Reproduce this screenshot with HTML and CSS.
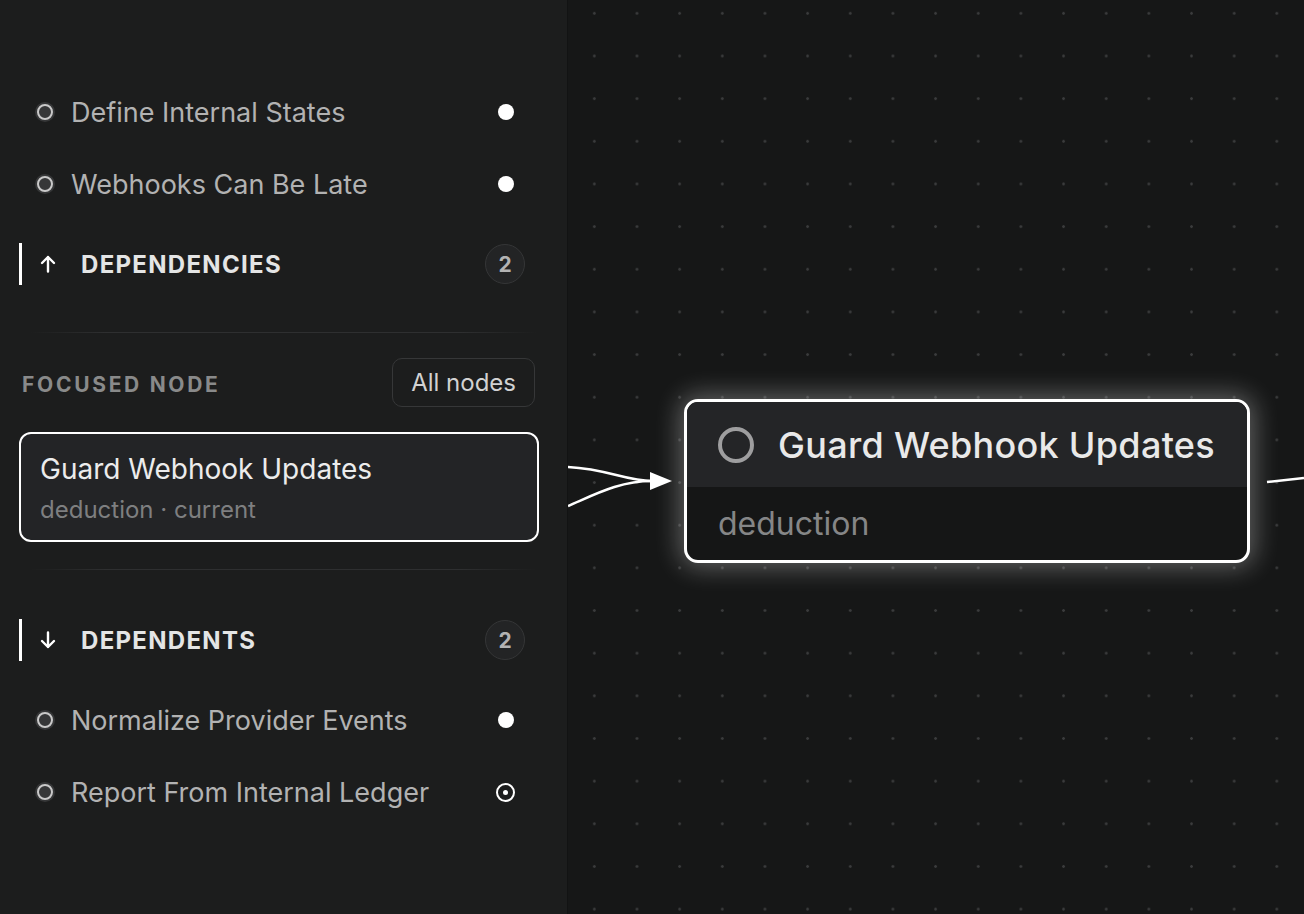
FILE: index.html
```html
<!DOCTYPE html>
<html lang="en">
<head>
  <meta charset="UTF-8" />
  <title>Graph focus</title>
  <link rel="stylesheet" href="styles.css">
</head>
<body>
  <!-- Sidebar with focused node and its neighbours -->
  <aside class="sidebar">
    <ul class="dep-list">
      <li class="dep-item">
        <span class="kind-icon"></span>
        <span class="dep-name">Define Internal States</span>
        <span class="status status-done"></span>
      </li>
      <li class="dep-item">
        <span class="kind-icon"></span>
        <span class="dep-name">Webhooks Can Be Late</span>
        <span class="status status-done"></span>
      </li>
    </ul>

    <div class="section-head">
      <svg class="dir-icon" viewBox="0 0 16 18" width="16" height="18">
        <path d="M8 16.5V2M2 8l6-6 6 6" fill="none" stroke="#fff" stroke-width="2.4" stroke-linecap="round" stroke-linejoin="round"/>
      </svg>
      <span class="section-title">DEPENDENCIES</span>
      <span class="count">2</span>
    </div>

    <div class="divider"></div>

    <div class="focus-row">
      <span class="focus-label">FOCUSED NODE</span>
      <button class="ghost-btn">All nodes</button>
    </div>

    <div class="focus-card">
      <div class="focus-title">Guard Webhook Updates</div>
      <div class="focus-meta">deduction · current</div>
    </div>

    <div class="divider"></div>

    <div class="section-head">
      <svg class="dir-icon" viewBox="0 0 16 18" width="16" height="18">
        <path d="M8 1.5V16M2 10l6 6 6-6" fill="none" stroke="#fff" stroke-width="2.4" stroke-linecap="round" stroke-linejoin="round"/>
      </svg>
      <span class="section-title">DEPENDENTS</span>
      <span class="count">2</span>
    </div>

    <ul class="dep-list">
      <li class="dep-item">
        <span class="kind-icon"></span>
        <span class="dep-name">Normalize Provider Events</span>
        <span class="status status-done"></span>
      </li>
      <li class="dep-item">
        <span class="kind-icon"></span>
        <span class="dep-name">Report From Internal Ledger</span>
        <span class="status status-active"></span>
      </li>
    </ul>
  </aside>

  <!-- Graph canvas -->
  <main class="canvas">
    <svg class="edges" width="736" height="914" viewBox="0 0 736 914">
      <path d="M0 467 C 40 469, 58 481, 84 481" fill="none" stroke="#fff" stroke-width="2.5"/>
      <path d="M0 506 C 28 494, 52 481, 84 481" fill="none" stroke="#fff" stroke-width="2.5"/>
      <path d="M82 472 L104 481 L82 490 Z" fill="#fff"/>
      <path d="M699 482 L736 478" fill="none" stroke="#fff" stroke-width="2.5"/>
    </svg>

    <div class="node node-focused">
      <div class="node-head">
        <span class="node-ring"></span>
        <span class="node-title">Guard Webhook Updates</span>
      </div>
      <div class="node-body">deduction</div>
    </div>
  </main>
</body>
</html>
```

FILE: styles.css
```css
* {
  margin: 0;
  padding: 0;
  box-sizing: border-box;
}

body {
  display: flex;
  height: 914px;
  overflow: hidden;
  background: #161717;
  font-family: 'Inter', 'Noto Sans', sans-serif;
  color: #e6e6e6;
}

/* Sidebar */
.sidebar {
  width: 568px;
  flex-shrink: 0;
  background: #1c1d1d;
  border-right: 1px solid #121313;
  padding-top: 76px;
  display: flex;
  flex-direction: column;
}

.dep-list {
  list-style: none;
}

.section-head + .dep-list {
  margin-top: 23px;
}

.dep-item {
  display: flex;
  align-items: center;
  height: 72px;
  padding: 0 53px 0 35px;
}

.kind-icon {
  width: 20px;
  height: 20px;
  border-radius: 50%;
  background: #363738;
  display: flex;
  align-items: center;
  justify-content: center;
  flex-shrink: 0;
}

.kind-icon::after {
  content: '';
  width: 12px;
  height: 12px;
  border-radius: 50%;
  border: 2px solid #c9c9c9;
}

.dep-name {
  flex: 1;
  margin-left: 16px;
  font-size: 27px;
  color: #b2b2b2;
}

.status {
  width: 16px;
  height: 16px;
  border-radius: 50%;
  flex-shrink: 0;
}

.status-done {
  background: #fff;
}

.status-active {
  width: 19px;
  height: 19px;
  margin-right: -1px;
  border: 2px solid #fff;
  display: flex;
  align-items: center;
  justify-content: center;
}

.status-active::after {
  content: '';
  width: 5px;
  height: 5px;
  border-radius: 50%;
  background: #fff;
}

/* Section headers */
.section-head {
  display: flex;
  align-items: center;
  height: 42px;
  margin: 23px 42px 0 19px;
  border-left: 3px solid #fff;
  padding-left: 18px;
}

.dir-icon {
  flex-shrink: 0;
}

.section-title {
  flex: 1;
  margin-left: 25px;
  font-size: 24px;
  font-weight: 700;
  letter-spacing: 1.3px;
  color: #e4e5e5;
}

.count {
  width: 40px;
  height: 40px;
  border-radius: 50%;
  background: #232425;
  border: 1.5px solid #353637;
  display: flex;
  align-items: center;
  justify-content: center;
  font-size: 21px;
  font-weight: 700;
  color: #b3b3b3;
}

.divider {
  height: 1px;
  margin: 47px 30px 0 30px;
  background: linear-gradient(to right, rgba(46, 47, 48, 0), #2e2f30 15%, #2e2f30 85%, rgba(46, 47, 48, 0));
}

/* Focused node block */
.focus-row {
  display: flex;
  align-items: center;
  justify-content: space-between;
  margin: 25px 32px 0 22px;
}

.focus-label {
  padding-top: 3px;
  font-size: 21px;
  font-weight: 700;
  letter-spacing: 2.7px;
  color: #898a8a;
}

.ghost-btn {
  height: 49px;
  padding: 0 18px;
  background: transparent;
  border: 1.5px solid #363738;
  border-radius: 10px;
  font-family: inherit;
  font-size: 24px;
  color: #d2d2d2;
}

.focus-card {
  margin: 25px 28px 0 19px;
  height: 110px;
  padding: 17px 19px 0;
  border: 2px solid #fff;
  border-radius: 12px;
  background: #232426;
}

.focus-title {
  font-size: 28px;
  line-height: 36px;
  color: #ececec;
}

.focus-meta {
  margin-top: 7px;
  font-size: 24px;
  line-height: 32px;
  color: #7e7f80;
}

.focus-card + .divider {
  margin-top: 27px;
}

.divider + .section-head {
  margin-top: 49px;
}

/* Canvas */
.canvas {
  flex: 1;
  position: relative;
  background-color: #161717;
  background-image: radial-gradient(circle, #3a3b3c 1.1px, transparent 1.6px);
  background-size: 42.67px 42.67px;
  background-position: 5px -8px;
}

.edges {
  position: absolute;
  top: 0;
  left: 0;
}

.node {
  position: absolute;
  left: 116px;
  top: 399px;
  width: 566px;
  height: 164px;
  border: 3px solid #fff;
  border-radius: 14px;
  overflow: hidden;
  background: #151616;
  display: flex;
  flex-direction: column;
}

.node-focused {
  box-shadow: 0 0 26px 4px rgba(255, 255, 255, 0.33);
}

.node-head {
  height: 85px;
  display: flex;
  align-items: center;
  padding-left: 31px;
  background: #242527;
}

.node-ring {
  width: 36px;
  height: 36px;
  border-radius: 50%;
  border: 4px solid #9e9e9f;
  flex-shrink: 0;
}

.node-title {
  margin-left: 24px;
  font-size: 36px;
  font-weight: 500;
  letter-spacing: 0.3px;
  color: #e9e9e9;
}

.node-body {
  flex: 1;
  display: flex;
  align-items: center;
  padding-left: 31px;
  font-size: 32px;
  color: #858687;
}
```
